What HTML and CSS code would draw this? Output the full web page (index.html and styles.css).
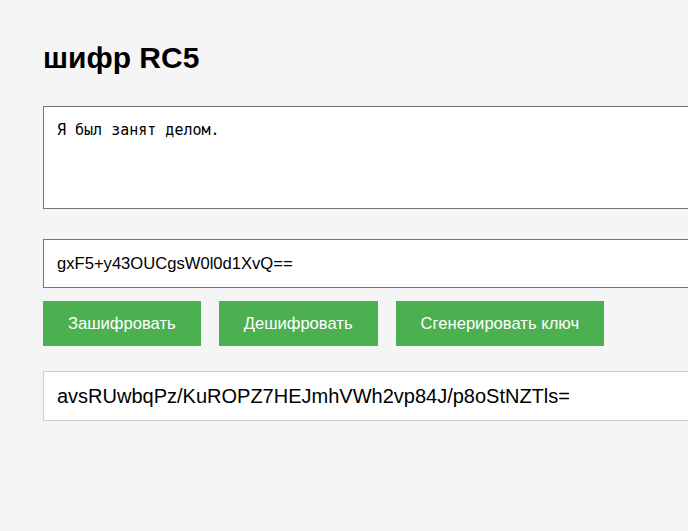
FILE: index.html
```html
<!DOCTYPE html>
<html lang="ru">
<head>
<meta charset="utf-8">
<title>шифр RC5</title>
<link rel="stylesheet" href="styles.css">
</head>
<body>
<main class="page">
  <h1 class="title">шифр RC5</h1>
  <textarea class="plain">Я был занят делом.</textarea>
  <input class="key" type="text" value="gxF5+y43OUCgsW0l0d1XvQ==">
  <div class="actions">
    <button class="btn">Зашифровать</button>
    <button class="btn">Дешифровать</button>
    <button class="btn">Сгенерировать ключ</button>
  </div>
  <div class="result">avsRUwbqPz/KuROPZ7HEJmhVWh2vp84J/p8oStNZTls=</div>
</main>
</body>
</html>
```

FILE: styles.css
```css
html, body {
  margin: 0;
  padding: 0;
  background: #f5f5f5;
  overflow: hidden;
}
body {
  font-family: "Liberation Sans", Arial, sans-serif;
  color: #000;
}
.page {
  padding: 20px 0 0 43px;
  width: 720px;
  display: flex;
  flex-direction: column;
}
.title {
  font-size: 30px;
  font-weight: bold;
  margin: 21px 0 0 0;
  line-height: 34px;
}
.plain {
  margin-top: 31px;
  box-sizing: border-box;
  width: 100%;
  height: 103px;
  border: 1px solid #767676;
  background: #fff;
  padding: 14px 13px 12px;
  font-family: "DejaVu Sans Mono", monospace;
  font-size: 15px;
  resize: none;
}
.key {
  margin-top: 30px;
  box-sizing: border-box;
  width: 100%;
  height: 49px;
  border: 1px solid #767676;
  background: #fff;
  padding: 0 13px;
  font-family: "Liberation Sans", Arial, sans-serif;
  font-size: 16.6px;
}
.actions {
  display: flex;
  gap: 18px;
  margin-top: 13px;
}
.btn {
  height: 45px;
  padding: 0 25px;
  border: none;
  background: #4caf50;
  color: #fff;
  font-family: "Liberation Sans", Arial, sans-serif;
  font-size: 16.6px;
}
.result {
  margin-top: 25px;
  box-sizing: border-box;
  height: 50px;
  border: 1px solid #ccc;
  background: #fff;
  padding: 0 13px;
  display: flex;
  align-items: center;
  font-size: 20px;
}
```
